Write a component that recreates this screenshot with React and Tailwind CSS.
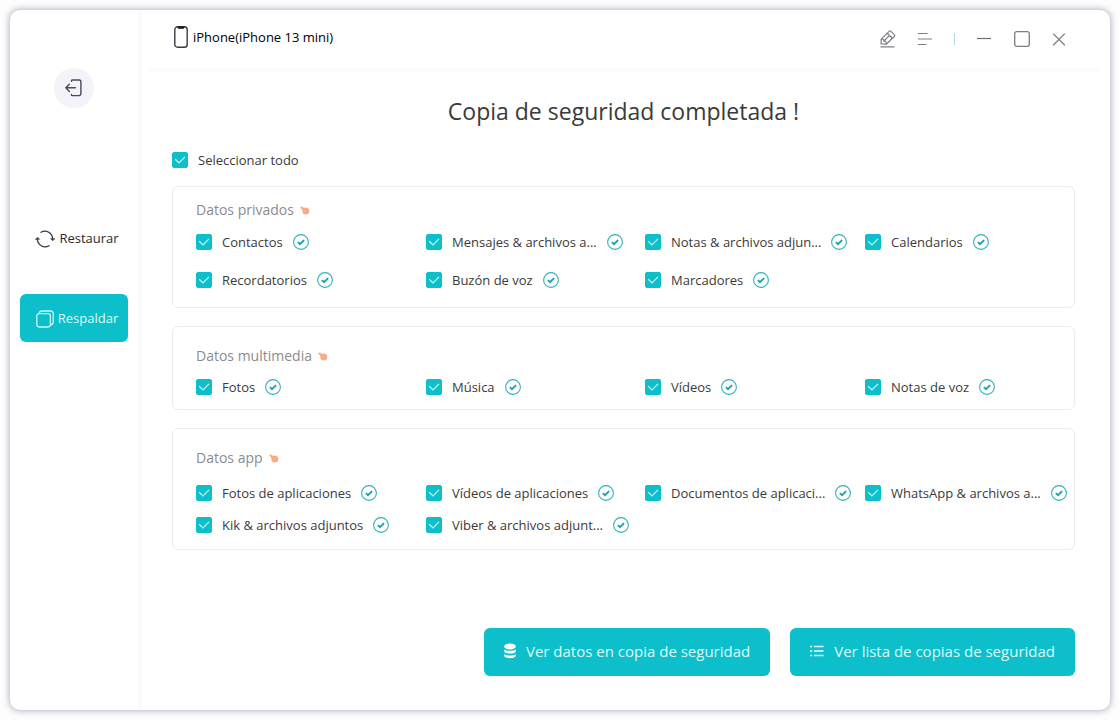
import React, { useState } from "react";

const groups = [
  {
    title: "Datos privados",
    cardClass: "pt-[13px] pb-[17px]",
    gridClass: "mt-3 gap-y-[18px]",
    items: [
      "Contactos",
      "Mensajes & archivos a...",
      "Notas & archivos adjun...",
      "Calendarios",
      "Recordatorios",
      "Buzón de voz",
      "Marcadores",
    ],
  },
  {
    title: "Datos multimedia",
    cardClass: "pt-[19px] pb-3",
    gridClass: "mt-[11px]",
    items: ["Fotos", "Música", "Vídeos", "Notas de voz"],
  },
  {
    title: "Datos app",
    cardClass: "pt-[19px] pb-[14px]",
    gridClass: "mt-[15px] gap-y-3",
    items: [
      "Fotos de aplicaciones",
      "Vídeos de aplicaciones",
      "Documentos de aplicaci...",
      "WhatsApp & archivos a...",
      "Kik & archivos adjuntos",
      "Viber & archivos adjunt...",
    ],
  },
];

const allItems = groups.flatMap((group) => group.items);

const ExitIcon = () => (
  <svg width="18" height="18" viewBox="0 0 18 18" fill="none" stroke="#4a4a55" strokeWidth="1.4" strokeLinecap="round" strokeLinejoin="round">
    <path d="M6.5 2.2V1.6c0-.4.2-.6.6-.6h7a1.8 1.8 0 0 1 1.8 1.8v12a1.8 1.8 0 0 1-1.8 1.8h-7c-.4 0-.6-.2-.6-.6v-.6" />
    <path d="M10.400 8.800H1M4.400 5.200.800 8.800l3.600 3.600" />
  </svg>
);

const RestoreIcon = () => (
  <svg width="20" height="18" viewBox="0 0 20 18" fill="none" stroke="#3a3a3a" strokeWidth="1.3" strokeLinecap="round">
    <path d="M6 2.3A7.700 7.700 0 0 1 17.600 9" />
    <path d="M14 15.700A7.700 7.700 0 0 1 2.400 9" />
    <path d="M17.600 10.600 15.600 8.700h4z" fill="#3a3a3a" strokeWidth="0.6" />
    <path d="M2.400 7.400.4 9.300h4z" fill="#3a3a3a" strokeWidth="0.6" />
  </svg>
);

const BackupIcon = () => (
  <svg width="18" height="18" viewBox="0 0 18 18" fill="none" stroke="#c9f7f9" strokeWidth="1.3" strokeLinejoin="round">
    <rect x="0.8" y="3.6" width="13.6" height="13.4" rx="2.4" />
    <path d="M3 3.6C3.4 1.8 4.3 1 6 1h8.8a2.4 2.4 0 0 1 2.4 2.4V12c0 1.7-.9 2.6-2.8 3" />
  </svg>
);

const PhoneIcon = () => (
  <svg width="14" height="22" viewBox="0 0 14 22" fill="none">
    <rect x="0.8" y="0.8" width="12.4" height="20.4" rx="2.8" stroke="#3b3b46" strokeWidth="1.4" />
    <path d="M3.6.5h6.8v1a1.200 1.200 0 0 1-1.200 1.200H4.800A1.200 1.200 0 0 1 3.600 1.500z" fill="#15151c" />
  </svg>
);

const PencilIcon = () => (
  <svg width="16" height="18" viewBox="0 0 16 18" fill="none" stroke="#7d7d85" strokeWidth="1.2" strokeLinejoin="round" strokeLinecap="round">
    <path d="M1 13.9 1.3 9.1 9.1 1.3a1.3 1.3 0 0 1 1.9 0l3.3 3.3a1.3 1.3 0 0 1 0 1.9L6.2 14.2z" />
    <path d="M1.300 9.100c2.200-.3 2.500.4 2.500 1.900 1.800 0 2.600.9 2.400 3.200M7 3.700c1.500 0 2.200.6 2.100 2.100 1.600 0 2.500.9 2.500 2.700M3.900 11 9.100 5.800" />
    <path d="M1 16.9h13" />
  </svg>
);

const MenuIcon = () => (
  <svg width="16" height="14" viewBox="0 0 16 14" stroke="#7d7d85" strokeWidth="1.2">
    <path d="M1 1.500h9.500M1 7h14M1 12.500h8.500" />
  </svg>
);

const DatabaseIcon = () => (
  <svg width="12" height="16" viewBox="0 0 12 16" fill="#ffffff">
    <ellipse cx="6" cy="3.4" rx="5.8" ry="3" />
    <path d="M.2 6.300c2 2 9.600 2 11.600 0v1.900c0 3.200-11.600 3.200-11.600 0z" />
    <path d="M.2 11c2 2 9.600 2 11.600 0v1.500c0 3.500-11.600 3.500-11.600 0z" />
  </svg>
);

const ListIcon = () => (
  <svg width="14" height="12" viewBox="0 0 14 12" stroke="#e8ffff" strokeWidth="1.5">
    <path d="M0 1.500h2.200M4 1.500h9.500M0 6h2.200M4 6h9.500M0 10.500h2.200M4 10.500h9.500" />
  </svg>
);

const KeyDot = () => (
  <svg width="10" height="9" viewBox="0 0 10 9" fill="#f9ab88">
    <circle cx="5.8" cy="5" r="3.500" />
    <circle cx="1.600" cy="1.600" r="1.200" />
    <path d="m1 2.500 1.200-1.600 2.600 1.300L3 4.200z" />
  </svg>
);

const DoneBadge = () => (
  <svg className="shrink-0" width="16" height="16" viewBox="0 0 16 16" fill="none">
    <circle cx="8" cy="8" r="7.400" stroke="#2fb0be" strokeWidth="1.1" />
    <path d="M4.900 8.100 7 10.100l4.100-4" stroke="#1ba3b4" strokeWidth="2" />
  </svg>
);

const CheckItem = ({ label, checked, onChange, done }) => (
  <div className="flex h-5 items-center gap-[10px] whitespace-nowrap text-[13px] leading-5 text-[#3a3a3a]">
    <label className="flex items-center gap-[10px]">
      <span className="grid h-4 w-4 shrink-0">
        <input
          type="checkbox"
          checked={checked}
          onChange={onChange}
          className="peer col-start-1 row-start-1 h-4 w-4 appearance-none rounded-[2px] border border-[#0cbfcb] checked:bg-[#0cbfcb]"
        />
        <svg
          className="pointer-events-none invisible col-start-1 row-start-1 peer-checked:visible"
          width="16"
          height="16"
          viewBox="0 0 16 16"
          fill="none"
          stroke="#c9f6f8"
          strokeWidth="1.2"
        >
          <path d="M3.200 7.300 7 11l6-6.200" />
        </svg>
      </span>
      {label}
    </label>
    {done && <DoneBadge />}
  </div>
);

const Sidebar = () => (
  <aside className="flex w-[132px] shrink-0 flex-col border-r-4 border-[#fafafb] px-[10px] pt-[58px]">
    <button aria-label="Volver" className="ml-[34px] flex h-10 w-10 items-center justify-center rounded-full bg-[#f3f3f9]">
      <ExitIcon />
    </button>
    <nav className="mt-[106px] flex flex-col gap-8 text-[13px]">
      <a href="#restaurar" className="flex h-12 items-center justify-center gap-1 pl-[6px] pt-px text-[#2b2b2b]">
        <RestoreIcon />
        Restaurar
      </a>
      <a href="#respaldar" className="flex h-12 items-center justify-center gap-1 rounded-md bg-[#0cbfcb] pl-[6px] pt-px text-[#dcfbfc]">
        <BackupIcon />
        Respaldar
      </a>
    </nav>
  </aside>
);

const TopBar = () => (
  <header className="ml-[6px] mr-[10px] flex h-[62px] shrink-0 items-start justify-between border-b-4 border-[#fbfbfb] pl-[26px] pr-[34px] pt-4">
    <div className="flex items-center gap-[5px] text-[13px] leading-[22px] text-black">
      <PhoneIcon />
      <span>iPhone(iPhone 13 mini)</span>
    </div>
    <div className="flex h-[26px] items-center">
      <button aria-label="Editar" className="mr-[21px]">
        <PencilIcon />
      </button>
      <button aria-label="Menú">
        <MenuIcon />
      </button>
      <span className="mx-[21px] h-3 w-px bg-[#b5d9e3]" />
      <button aria-label="Minimizar" className="mr-[22px]">
        <svg width="16" height="16" viewBox="0 0 16 16" stroke="#6f6f76" strokeWidth="1.2">
          <path d="M1 7.500h14" />
        </svg>
      </button>
      <button aria-label="Maximizar" className="mr-[22px]">
        <svg width="16" height="16" viewBox="0 0 16 16" fill="none" stroke="#7d7d85" strokeWidth="1.3">
          <rect x="0.7" y="0.7" width="14.6" height="14.6" rx="2" />
        </svg>
      </button>
      <button aria-label="Cerrar">
        <svg width="14" height="14" viewBox="0 0 14 14" stroke="#7d7d85" strokeWidth="1.3">
          <path d="m1.200 1.600 11.600 11.600M12.800 1.600 1.200 13.200" />
        </svg>
      </button>
    </div>
  </header>
);

const GroupCard = ({ group, selected, onToggle }) => (
  <section className={`rounded-md border border-[#ececee] pl-[23px] ${group.cardClass}`}>
    <h2 className="flex h-5 items-center gap-[6px] text-sm text-[#8b8b91]">
      {group.title}
      <KeyDot />
    </h2>
    <div className={`grid grid-cols-[230fr_219fr_220fr_209fr] ${group.gridClass}`}>
      {group.items.map((item) => (
        <CheckItem
          key={item}
          label={item}
          checked={selected.includes(item)}
          onChange={() => onToggle(item)}
          done
        />
      ))}
    </div>
  </section>
);

const App = () => {
  const [selected, setSelected] = useState(allItems);
  const allSelected = selected.length === allItems.length;

  const toggle = (item) =>
    setSelected((prev) =>
      prev.includes(item) ? prev.filter((i) => i !== item) : [...prev, item]
    );

  return (
    <div className="flex min-h-screen bg-[#fdfdfe] p-[10px] font-['Open_Sans','Noto_Sans',sans-serif]">
      <div className="flex flex-1 rounded-[10px] bg-white shadow-[0_0_6px_1px_rgba(110,110,135,0.5)]">
        <Sidebar />
        <div className="flex flex-1 flex-col">
          <TopBar />
          <main className="flex flex-1 flex-col pb-[34px] pl-[30px] pr-[35px] pt-[21px]">
            <h1 className="text-center text-[23px] leading-9 text-[#3a3a3a]">
              Copia de seguridad completada !
            </h1>
            <div className="mb-4 mt-[21px]">
              <CheckItem
                label="Seleccionar todo"
                checked={allSelected}
                onChange={() => setSelected(allSelected ? [] : allItems)}
              />
            </div>
            <div className="flex flex-col gap-[18px]">
              {groups.map((group) => (
                <GroupCard key={group.title} group={group} selected={selected} onToggle={toggle} />
              ))}
            </div>
            <div className="mt-auto flex justify-end gap-5 text-[15px] text-[#dcfbfc]">
              <button className="flex h-12 items-center gap-[10px] rounded-md bg-[#0cbfcb] px-5 pb-[2px]">
                <DatabaseIcon />
                Ver datos en copia de seguridad
              </button>
              <button className="flex h-12 items-center gap-[10px] rounded-md bg-[#0cbfcb] px-5 pb-[2px]">
                <ListIcon />
                Ver lista de copias de seguridad
              </button>
            </div>
          </main>
        </div>
      </div>
    </div>
  );
};

export default App;
